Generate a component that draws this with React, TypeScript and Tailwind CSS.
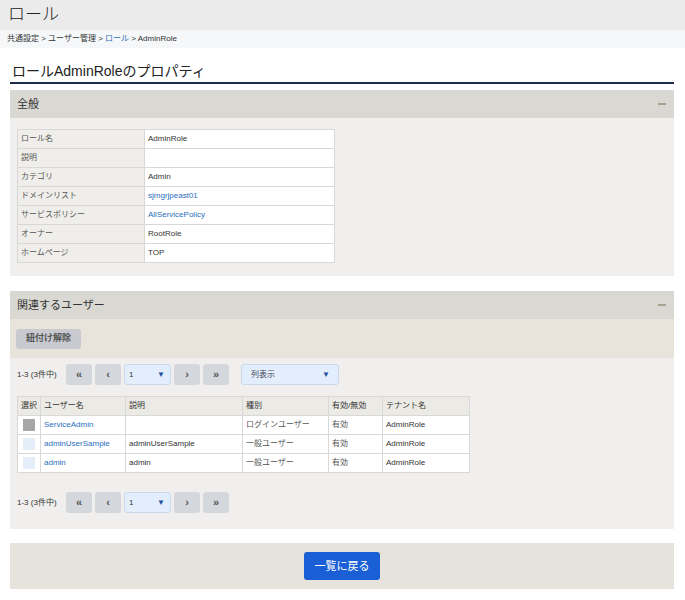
import React from 'react';

const FONT = 'font-["Liberation_Sans","Noto_Sans_CJK_JP",sans-serif]';

const PROPS: { label: string; value: string; link?: boolean }[] = [
  { label: 'ロール名', value: 'AdminRole' },
  { label: '説明', value: '' },
  { label: 'カテゴリ', value: 'Admin' },
  { label: 'ドメインリスト', value: 'sjmgrjpeast01', link: true },
  { label: 'サービスポリシー', value: 'AllServicePolicy', link: true },
  { label: 'オーナー', value: 'RootRole' },
  { label: 'ホームページ', value: 'TOP' },
];

const USERS = [
  { name: 'ServiceAdmin', desc: '', kind: 'ログインユーザー', active: '有効', tenant: 'AdminRole', locked: true },
  { name: 'adminUserSample', desc: 'adminUserSample', kind: '一般ユーザー', active: '有効', tenant: 'AdminRole', locked: false },
  { name: 'admin', desc: 'admin', kind: '一般ユーザー', active: '有効', tenant: 'AdminRole', locked: false },
];

function SectionHeader({ title }: { title: string }) {
  return (
    <div className="h-[28px] bg-[#d9d8d2] pl-[7px] pr-[8px] flex items-center justify-between">
      <span className="text-[11px] text-[#333]">{title}</span>
      <span className="w-[8px] h-[2px] bg-[#a5a48f]" />
    </div>
  );
}

function PagerButton({ children }: { children: React.ReactNode }) {
  return (
    <button className="w-[26px] h-[21px] bg-[#d4d7dc] rounded-[3px] flex items-center justify-center text-[11px] font-bold text-[#555] leading-none">
      {children}
    </button>
  );
}

function Pager({ showColumns }: { showColumns?: boolean }) {
  return (
    <div className="flex items-center h-[21px]">
      <span className="text-[8px] text-[#333] w-[49px]">1-3 (3件中)</span>
      <div className="flex items-center gap-[3px]">
        <PagerButton>«</PagerButton>
        <PagerButton>‹</PagerButton>
        <div className="w-[47px] h-[21px] bg-[#e2eefb] border border-[#c9daf0] rounded-[3px] flex items-center justify-between pl-[4px] pr-[5px]">
          <span className="text-[8px] text-[#333]">1</span>
          <span className="text-[8px] text-[#2450a0]">▼</span>
        </div>
        <PagerButton>›</PagerButton>
        <PagerButton>»</PagerButton>
      </div>
      {showColumns && (
        <div className="ml-[12px] w-[98px] h-[21px] bg-[#e2eefb] border border-[#c9daf0] rounded-[3px] flex items-center justify-between pl-[9px] pr-[8px]">
          <span className="text-[8px] text-[#445]">列表示</span>
          <span className="text-[8px] text-[#2450a0]">▼</span>
        </div>
      )}
    </div>
  );
}

export default function App() {
  return (
    <div className={`w-[685px] min-h-[600px] bg-white ${FONT} text-[#333]`}>
      <div className="h-[30px] bg-[#ebebeb] pl-[8px] flex items-center text-[17px] font-light text-[#222]">ロール</div>
      <div className="h-[18px] bg-[#f5f7f8] pl-[7px] flex items-center text-[8px] text-[#333]">
        共通設定 &gt; ユーザー管理 &gt;&nbsp;<span className="text-[#2a6ebb]">ロール</span>&nbsp;&gt; AdminRole
      </div>

      <div className="pl-[10px] pr-[11px]">
        <div className="pt-[15px] pb-[3px] px-[2px] border-b-2 border-[#1f2d4d] text-[14px] leading-[16px] text-[#222]">
          ロールAdminRoleのプロパティ
        </div>

        <div className="mt-[6px]">
          <SectionHeader title="全般" />
          <div className="bg-[#f0efed] pt-[11px] pb-[13px] pl-[7px]">
            <table className="w-[318px] border-collapse text-[8px]">
              <tbody>
                {PROPS.map((p) => (
                  <tr key={p.label} className="h-[19px]">
                    <td className="w-[127px] border border-[#d8d8d8] bg-[#efeeea] pl-[3px] text-[#555]">{p.label}</td>
                    <td className="border border-[#d8d8d8] bg-white pl-[3px]">
                      {p.link ? <span className="text-[#2a6ebb]">{p.value}</span> : p.value}
                    </td>
                  </tr>
                ))}
              </tbody>
            </table>
          </div>
        </div>

        <div className="mt-[15px]">
          <SectionHeader title="関連するユーザー" />
          <div className="h-[39px] bg-[#e8e4dc] pl-[6px] flex items-center">
            <button className="w-[65px] h-[20px] bg-[#c8cad0] rounded-[3px] text-[9px] font-bold text-[#555]">紐付け解除</button>
          </div>
          <div className="bg-[#f0efed] pt-[6px] pb-[16px] pl-[7px]">
            <Pager showColumns />
            <table className="mt-[11px] w-[453px] border-collapse text-[8px]">
              <thead>
                <tr className="h-[19px] bg-[#eceae5] text-left">
                  <th className="w-[23px] border border-[#d8d8d8] pl-[3px] font-normal">選択</th>
                  <th className="w-[85px] border border-[#d8d8d8] pl-[3px] font-normal">ユーザー名</th>
                  <th className="w-[117px] border border-[#d8d8d8] pl-[3px] font-normal">説明</th>
                  <th className="w-[86px] border border-[#d8d8d8] pl-[3px] font-normal">種別</th>
                  <th className="w-[54px] border border-[#d8d8d8] pl-[3px] font-normal">有効/無効</th>
                  <th className="border border-[#d8d8d8] pl-[3px] font-normal">テナント名</th>
                </tr>
              </thead>
              <tbody>
                {USERS.map((u) => (
                  <tr key={u.name} className="h-[19px] bg-white">
                    <td className="border border-[#d8d8d8] pl-[5px]">
                      <div className={`w-[12px] h-[12px] ${u.locked ? 'bg-[#a6a6a6]' : 'bg-[#e3eef9]'}`} />
                    </td>
                    <td className="border border-[#d8d8d8] pl-[3px] text-[#2a6ebb]">{u.name}</td>
                    <td className="border border-[#d8d8d8] pl-[3px]">{u.desc}</td>
                    <td className="border border-[#d8d8d8] pl-[3px] text-[#555]">{u.kind}</td>
                    <td className="border border-[#d8d8d8] pl-[3px] text-[#555]">{u.active}</td>
                    <td className="border border-[#d8d8d8] pl-[3px]">{u.tenant}</td>
                  </tr>
                ))}
              </tbody>
            </table>
            <div className="mt-[19px]">
              <Pager />
            </div>
          </div>
        </div>

        <div className="mt-[14px] h-[46px] bg-[#e6e2dc] flex items-center justify-center">
          <button className="w-[76px] h-[28px] bg-[#1a5fd6] rounded-[3px] text-white text-[11px]">一覧に戻る</button>
        </div>
      </div>
    </div>
  );
}
